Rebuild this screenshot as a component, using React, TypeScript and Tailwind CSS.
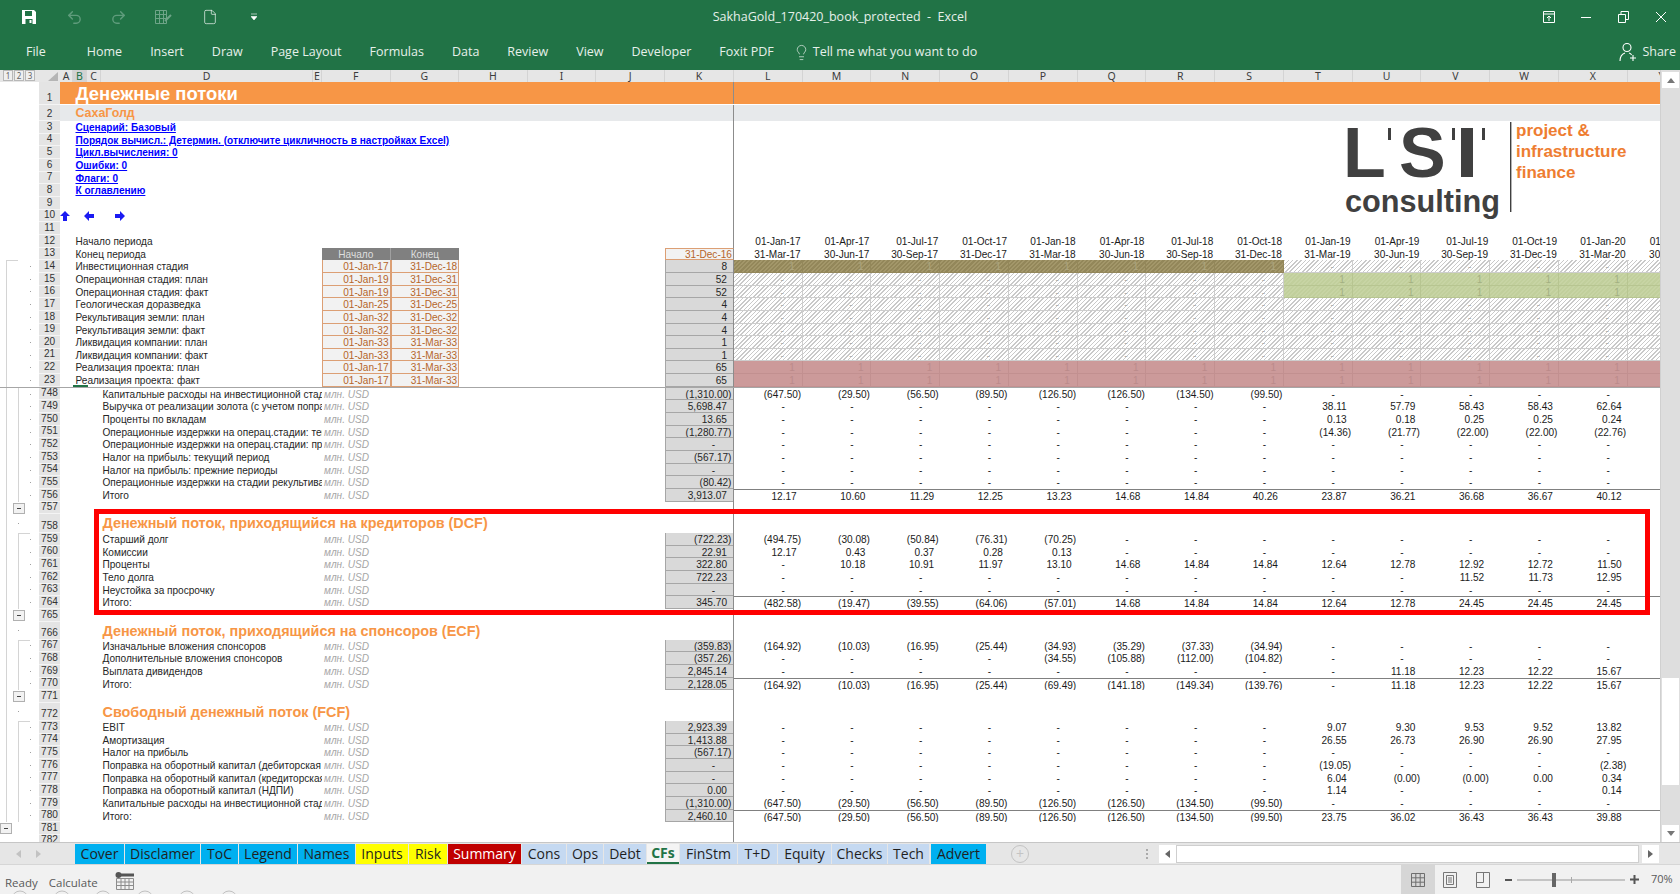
import { ReactNode } from "react";
import clsx from "clsx";
import { File, Lightbulb, Redo2, Undo2 } from "lucide-react";

const d = (n: number) => Array<string>(n).fill("-");
const starts = ["01-Jan-17", "01-Apr-17", "01-Jul-17", "01-Oct-17", "01-Jan-18", "01-Apr-18", "01-Jul-18", "01-Oct-18", "01-Jan-19", "01-Apr-19", "01-Jul-19", "01-Oct-19", "01-Jan-20", "01-Apr-20"];
const ends = ["31-Mar-17", "30-Jun-17", "30-Sep-17", "31-Dec-17", "31-Mar-18", "30-Jun-18", "30-Sep-18", "31-Dec-18", "31-Mar-19", "30-Jun-19", "30-Sep-19", "31-Dec-19", "31-Mar-20", "30-Jun-20"];
const capex = ["(647.50)", "(29.50)", "(56.50)", "(89.50)", "(126.50)", "(126.50)", "(134.50)", "(99.50)"];

const ribbon = ["Home", "Insert", "Draw", "Page Layout", "Formulas", "Data", "Review", "View", "Developer", "Foxit PDF"];

const columns = [
  { l: "A", w: "w-[13px]" },
  { l: "B", w: "w-[14px] bg-[#d2d2d2] border-b-2 border-[#217346] text-[#217346]" },
  { l: "C", w: "w-[14px]" },
  { l: "D", w: "w-[212px]" },
  { l: "E", w: "w-[9px]" },
  { l: "F", w: "w-[68.6px]" },
  { l: "G", w: "w-[68.6px]" },
  { l: "H", w: "w-[68.6px]" },
  { l: "I", w: "w-[68.6px]" },
  { l: "J", w: "w-[68.6px]" },
  { l: "K", w: "w-[69px]" },
  ...["L", "M", "N", "O", "P", "Q", "R", "S", "T", "U", "V", "W", "X", "Y"].map((l) => ({ l, w: "w-[68.75px]" })),
];

const tabs = [
  { t: "Cover", c: "w-[49px] bg-[#00b0f0]" },
  { t: "Disclamer", c: "w-[75px] bg-[#00b0f0]" },
  { t: "ToC", c: "w-[37px] bg-[#00b0f0]" },
  { t: "Legend", c: "w-[58px] bg-[#00b0f0]" },
  { t: "Names", c: "w-[57px] bg-[#00b0f0]" },
  { t: "Inputs", c: "w-[52px] bg-[#ffff00]" },
  { t: "Risk", c: "w-[38px] bg-[#ffff00]" },
  { t: "Summary", c: "w-[73px] bg-[#c00000] text-white" },
  { t: "Cons", c: "w-[44px] bg-[#c5d9f1]" },
  { t: "Ops", c: "w-[36px] bg-[#c5d9f1]" },
  { t: "Debt", c: "w-[42px] bg-[#c5d9f1]" },
  { t: "CFs", c: "w-[32px] bg-[#f4f4f4] font-bold text-[#217346] border-b-2 border-[#217346]" },
  { t: "FinStm", c: "w-[57px] bg-[#c5d9f1]" },
  { t: "T+D", c: "w-[39px] bg-[#c5d9f1]" },
  { t: "Equity", c: "w-[53px] bg-[#c5d9f1]" },
  { t: "Checks", c: "w-[55px] bg-[#c5d9f1]" },
  { t: "Tech", c: "w-[41px] bg-[#c5d9f1]" },
  { t: "Advert", c: "ml-[1px] w-[55px] bg-[#00b0f0]" },
];

function Num({ v, className }: { v?: string; className?: string }) {
  return (
    <div
      className={clsx(
        "h-full shrink-0 overflow-hidden whitespace-nowrap text-right",
        v === "-" ? "pr-[18px]" : v?.startsWith("(") ? "pr-[1.5px]" : "pr-[6px]",
        className,
      )}
    >
      {v}
    </div>
  );
}

function Gutter({ lv1, lv2, dot, btn }: { lv1?: boolean | "start"; lv2?: boolean | "start"; dot?: 2 | 3; btn?: 1 | 2 }) {
  return (
    <div className="flex h-full w-[39px] shrink-0 pl-[6px]">
      <div className={clsx("flex h-full w-[12px] items-center", lv1 && "border-l border-[#d4d4d4]", lv1 === "start" && "border-t")}>
        {btn === 1 && <Minus className="-ml-[6px]" />}
      </div>
      <div className={clsx("flex h-full w-[12px] items-center", lv2 && "border-l border-[#d4d4d4]", lv2 === "start" && "border-t")}>
        {btn === 2 && <Minus className="-ml-[5px]" />}
        {dot === 2 && <div className="size-px bg-[#a0a0a0]" />}
      </div>
      <div className="flex h-full items-center">{dot === 3 && <div className="size-px bg-[#a0a0a0]" />}</div>
    </div>
  );
}

function Minus({ className }: { className?: string }) {
  return (
    <div className={clsx("z-10 flex h-[11px] w-[12px] shrink-0 items-center justify-center border border-[#b0b0b0] bg-[#f2f2f2]", className)}>
      <div className="h-px w-[4px] bg-[#444444]" />
    </div>
  );
}

function RowNumber({ n }: { n: number }) {
  return (
    <div className="flex h-full w-[21px] shrink-0 items-end justify-center border-b border-[#f4f4f4] bg-[#e4e4e4] text-[#333333]">{n}</div>
  );
}

type RowProps = {
  n: number;
  h?: string;
  bg?: string;
  label?: ReactNode;
  labelClass?: string;
  deep?: boolean;
  unit?: boolean;
  f?: string;
  g?: string;
  k?: string;
  vals?: string[];
  valsClass?: string;
  line?: boolean;
  timeline?: ReactNode;
  gutter?: { lv1?: boolean | "start"; lv2?: boolean | "start"; dot?: 2 | 3; btn?: 1 | 2 };
};

function Row({ n, h = "h-[12.67px]", bg, label, labelClass, deep, unit, f, g, k, vals, valsClass, line, timeline, gutter }: RowProps) {
  return (
    <div className={clsx("flex shrink-0", h)}>
      <Gutter {...gutter} />
      <RowNumber n={n} />
      <div className={clsx("flex h-full flex-1", bg)}>
        <div className={clsx("h-full w-[262px] shrink-0 whitespace-nowrap", deep ? "pl-[42.5px]" : "pl-[15.5px]", unit && "overflow-hidden", labelClass)}>
          {label}
        </div>
        <div className="h-full w-[68.6px] shrink-0">
          {unit && <div className="pl-[2px] italic text-[#a6a6a6]">млн. USD</div>}
          {f && <DateCell v={f} />}
        </div>
        <div className="h-full w-[68.6px] shrink-0">{g && <DateCell v={g} />}</div>
        <div className="h-full w-[205.8px] shrink-0" />
        <div className="h-full w-[69px] shrink-0 border-r border-[#8c8c8c]">
          {k !== undefined && <Num v={k} className="w-full border-b border-l border-[#a6a6a6] bg-[#d9d9d9] text-[#262626]" />}
        </div>
        {timeline}
        {vals?.map((v, i) => (
          <Num key={i} v={v} className={clsx("w-[68.75px] text-[#1a1a1a]", line && "border-t border-[#808080]", valsClass)} />
        ))}
        {vals && line && <div className="h-full flex-1 border-t border-[#808080]" />}
      </div>
    </div>
  );
}

function DateCell({ v }: { v: string }) {
  return (
    <div className="h-full border-x border-b border-[#dc9f74] bg-[#f2f2f2] pr-[1px] text-right leading-[13px] text-[#b5652a]">{v}</div>
  );
}

function Bar({ from, to, kind, mark }: { from: number; to: number; kind: string; mark: string }) {
  const cls =
    kind === "olive"
      ? "bg-[repeating-linear-gradient(135deg,#93875a_0,#93875a_1.5px,#a3976a_1.5px,#a3976a_3px)] border-[#93875a] text-[#aca57f]"
      : kind === "green"
        ? "bg-[repeating-linear-gradient(135deg,#c1cf9c_0,#c1cf9c_1.5px,#c7d4a4_1.5px,#c7d4a4_3px)] border-[#b7c591] text-[#a3b082]"
        : kind === "red"
          ? "bg-[#cc9a9a] border-[#c29090] text-[#bb8a8a]"
          : "bg-[repeating-linear-gradient(135deg,#c9c9c9_0,#c9c9c9_1px,#ffffff_1px,#ffffff_3px)] border-[#cdcdcd] text-[#a8a8a8]";
  return (
    <>
      {Array.from({ length: to - from }).map((_, i) => (
        <div
          key={i}
          className={clsx(
            "h-full w-[68.75px] shrink-0 overflow-hidden border-r border-b text-right",
            mark === "-" ? "pr-[18px]" : "pr-[7px]",
            cls,
          )}
        >
          {mark}
        </div>
      ))}
    </>
  );
}

function Hatch({ a, b }: { a?: [string, string]; b?: [string, string] }) {
  return (
    <>
      <Bar from={0} to={8} kind={a?.[0] ?? "hatch"} mark={a?.[1] ?? "-"} />
      <Bar from={8} to={14} kind={b?.[0] ?? "hatch"} mark={b?.[1] ?? "-"} />
    </>
  );
}

function Logo() {
  return (
    <svg width="300" height="104" viewBox="0 0 300 104" className="absolute left-[1340px] top-[38px]">
      <g fontFamily="'Liberation Sans', Arial, sans-serif" fontWeight="700">
        <text x="3" y="57" fontSize="70" fill="#404040">L</text>
        <rect x="48" y="8" width="3" height="12" fill="#404040" />
        <text x="59" y="57" fontSize="70" fill="#404040">S</text>
        <rect x="112" y="8" width="3" height="12" fill="#404040" />
        <rect x="121" y="8" width="12" height="49" fill="#404040" />
        <rect x="142" y="8" width="3" height="12" fill="#404040" />
        <text x="5" y="92" fontSize="32" fill="#404040" textLength="155" lengthAdjust="spacingAndGlyphs">consulting</text>
        <rect x="170" y="2" width="1.4" height="90" fill="#404040" />
        <text x="176" y="16" fontSize="17" fill="#ee7d31">project &amp;</text>
        <text x="176" y="37" fontSize="17" fill="#ee7d31">infrastructure</text>
        <text x="176" y="58" fontSize="17" fill="#ee7d31">finance</text>
      </g>
    </svg>
  );
}

function Link({ children }: { children: ReactNode }) {
  return <span className="font-bold text-[#0000ff] underline">{children}</span>;
}

function Arrow({ dir, className }: { dir: "up" | "left" | "right"; className?: string }) {
  const p = dir === "up" ? "M5 0l5 5H7v5H3V5H0z" : dir === "left" ? "M0 5l5-5v3h5v4H5v3z" : "M10 5L5 0v3H0v4h5v3z";
  return (
    <svg width="10" height="10" viewBox="0 0 10 10" className={clsx("shrink-0", className)}>
      <path d={p} fill="#1b1bf2" />
    </svg>
  );
}

function TitleBar() {
  return (
    <div className="grid h-[34px] grid-cols-[1fr_auto_1fr] items-center text-white">
      <div className="flex items-center pl-[22px]">
        <svg width="14" height="14" viewBox="0 0 14 14">
          <path d="M0 0h12l2 2v12H0z" fill="#ffffff" />
          <rect x="3" y="1" width="7" height="5" fill="#217346" />
          <rect x="3.5" y="9" width="7" height="5" fill="#217346" />
          <rect x="7.5" y="10" width="2" height="3" fill="#ffffff" />
        </svg>
        <Undo2 size={17} strokeWidth={2} className="ml-[30px] text-[#5f9c7c]" />
        <Redo2 size={17} strokeWidth={2} className="ml-[27px] text-[#5f9c7c]" />
        <svg width="20" height="16" viewBox="0 0 20 16" fill="none" stroke="#6ea488" className="ml-[27px]">
          <path d="M1.5 1.5h11v13h-11zM1.5 5.5h11M1.5 9.5h11M5.5 1.5v13M9.5 1.5v13" />
          <path d="M11 12l6-6" strokeWidth="2" />
        </svg>
        <File size={16} strokeWidth={1} className="ml-[28px]" />
        <svg width="6" height="8" viewBox="0 0 6 8" className="ml-[33px]">
          <path d="M0 1h6M0 3.5h6L3 7z" fill="#ffffff" stroke="#ffffff" strokeWidth="0.6" />
        </svg>
      </div>
      <div className="font-['Open_Sans',sans-serif] text-[12.5px] text-[#e6f0ea]">SakhaGold_170420_book_protected&nbsp; -&nbsp; Excel</div>
      <div className="flex items-center justify-end pr-[13px]">
        <svg width="12" height="12" viewBox="0 0 12 12" fill="none" stroke="#ffffff">
          <path d="M.5 .5h11v11H.5zM.5 3h11M6 10V5M4 7l2-2 2 2" />
        </svg>
        <div className="ml-[26px] h-px w-[10px] bg-white" />
        <svg width="11" height="12" viewBox="0 0 11 12" fill="none" stroke="#ffffff" className="ml-[27px]">
          <path d="M.5 3.5h7v8h-7zM3 3.5V.5h7.5v8H7.5" />
        </svg>
        <svg width="12" height="12" viewBox="0 0 12 12" fill="none" stroke="#ffffff" className="ml-[26px]">
          <path d="M1 1l10 10M11 1L1 11" />
        </svg>
      </div>
    </div>
  );
}

function RibbonTabs() {
  return (
    <div className="flex h-[36px] items-center font-['Open_Sans',sans-serif] text-[12.5px] text-[#e6f0ea]">
      <div className="pl-[26px]">File</div>
      <div className="ml-[41px] flex gap-[28px]">
        {ribbon.map((t) => (
          <div key={t}>{t}</div>
        ))}
      </div>
      <Lightbulb size={17} strokeWidth={1} className="ml-[19px]" />
      <div className="ml-[3px]">Tell me what you want to do</div>
      <div className="flex-1" />
      <svg width="18" height="20" viewBox="0 0 18 20" fill="none" stroke="#ffffff" strokeWidth="1.1">
        <circle cx="8" cy="5.5" r="4" />
        <path d="M1 19c0-5 2-7 5-8M10 11c1 .3 2 1 2.6 1.8M11 16h6M14 13v6" />
      </svg>
      <div className="ml-[5px] pr-[4px]">Share</div>
    </div>
  );
}

function ColumnHeader() {
  return (
    <div className="flex h-[12px] shrink-0 bg-[#e6e6e6] text-[10.5px] leading-[12px] text-[#3c3c3c]">
      <div className="flex w-[39px] shrink-0 gap-px pl-[3px]">
        {["1", "2", "3"].map((x) => (
          <div key={x} className="h-[11px] w-[10px] border border-[#b8b8b8] bg-[#efefef] text-center text-[8px] leading-[9px] text-[#666666]">{x}</div>
        ))}
      </div>
      <div className="flex w-[21px] shrink-0 items-end pb-[1px] pl-[9px]">
        <div className="size-0 border-b-[9px] border-l-[10px] border-b-[#b5b5b5] border-l-transparent" />
      </div>
      {columns.map((c) => (
        <div key={c.l} className={clsx("shrink-0 border-r border-[#d4d4d4] text-center", c.w)}>{c.l}</div>
      ))}
    </div>
  );
}

function Sheet() {
  const on = { lv1: true as const, dot: 3 as const };
  const tl = (a?: [string, string], b?: [string, string]) => <Hatch a={a} b={b} />;
  const l1 = { lv1: "start" as const, dot: 3 as const };
  const body = { lv1: true as const, lv2: true as const, dot: 3 as const };
  const bstart = { lv1: true as const, lv2: "start" as const, dot: 3 as const };
  const head = { lv1: true as const, dot: 2 as const };
  const headText = "text-[14.4px] font-bold leading-[18px] text-[#f79646]";
  return (
    <div className="relative h-[760px] w-full overflow-hidden font-['Liberation_Sans',Arial,sans-serif] text-[10.08px] leading-[13px] text-[#262626]">
      <div className="flex w-[1696.5px] flex-col">
        <Row n={1} h="h-[23px]" bg="bg-[#f79646] border-b border-white" labelClass="text-[18.4px] font-bold leading-[23px] text-white" label="Денежные потоки" />
        <Row n={2} h="h-[16px]" bg="bg-[#e7e9eb]" labelClass="text-[12.4px] font-bold leading-[17px] text-[#f79646]" label="СахаГолд" />
        <Row n={3} label={<Link>Сценарий: Базовый</Link>} />
        <Row n={4} label={<Link>Порядок вычисл.: Детермин. (отключите цикличность в настройках Excel)</Link>} />
        <Row n={5} label={<Link>Цикл.вычисления: 0</Link>} />
        <Row n={6} label={<Link>Ошибки: 0</Link>} />
        <Row n={7} label={<Link>Флаги: 0</Link>} />
        <Row n={8} label={<Link>К оглавлению</Link>} />
        <Row n={9} />
        <Row
          n={10}
          labelClass="!pl-0"
          label={
            <div className="flex h-full items-center pt-[1px]">
              <Arrow dir="up" />
              <Arrow dir="left" className="ml-[14px]" />
              <Arrow dir="right" className="ml-[21px]" />
            </div>
          }
        />
        <Row n={11} />
        <Row n={12} label="Начало периода" vals={starts} valsClass="!pr-[2px]" />
        <div className="flex h-[12.67px] shrink-0">
          <Gutter />
          <RowNumber n={13} />
          <div className="h-full w-[262px] shrink-0 pl-[15.5px]">Конец периода</div>
          <div className="h-full w-[68.6px] shrink-0 border-r border-[#a0a0a0] bg-[#808080] text-center text-[#dedede]">Начало</div>
          <div className="h-full w-[68.6px] shrink-0 bg-[#808080] text-center text-[#dedede]">Конец</div>
          <div className="h-full w-[205.8px] shrink-0" />
          <div className="h-full w-[69px] shrink-0 border border-r-[#8c8c8c] border-[#dc9f74] bg-[#f2f2f2] pr-[1px] text-right leading-[12px] text-[#b5652a]">31-Dec-16</div>
          {ends.map((e) => (
            <Num key={e} v={e} className="w-[68.75px] !pr-[2px] text-[#1a1a1a]" />
          ))}
        </div>
        <Row n={14} gutter={l1} label="Инвестиционная стадия" f="01-Jan-17" g="31-Dec-18" k="8" timeline={tl(["olive", "1"])} />
        <Row n={15} gutter={on} label="Операционная стадия: план" f="01-Jan-19" g="31-Dec-31" k="52" timeline={tl(undefined, ["green", "1"])} />
        <Row n={16} gutter={on} label="Операционная стадия: факт" f="01-Jan-19" g="31-Dec-31" k="52" timeline={tl(undefined, ["green", "1"])} />
        <Row n={17} gutter={on} label="Геологическая доразведка" f="01-Jan-25" g="31-Dec-25" k="4" timeline={tl()} />
        <Row n={18} gutter={on} label="Рекультивация земли: план" f="01-Jan-32" g="31-Dec-32" k="4" timeline={tl()} />
        <Row n={19} gutter={on} label="Рекультивация земли: факт" f="01-Jan-32" g="31-Dec-32" k="4" timeline={tl()} />
        <Row n={20} gutter={on} label="Ликвидация компании: план" f="01-Jan-33" g="31-Mar-33" k="1" timeline={tl()} />
        <Row n={21} gutter={on} label="Ликвидация компании: факт" f="01-Jan-33" g="31-Mar-33" k="1" timeline={tl()} />
        <Row n={22} gutter={on} label="Реализация проекта: план" f="01-Jan-17" g="31-Mar-33" k="65" timeline={tl(["red", "1"], ["red", "1"])} />
        <Row n={23} gutter={on} label="Реализация проекта: факт" f="01-Jan-17" g="31-Mar-33" k="65" timeline={tl(["red", "1"], ["red", "1"])} />
        <div className="h-0 w-full border-t border-[#a6a6a6]" />
        <Row n={748} gutter={body} deep unit label="Капитальные расходы на инвестиционной стадии" k="(1,310.00)" vals={[...capex, ...d(5)]} />
        <Row n={749} gutter={body} deep unit label="Выручка от реализации золота (с учетом поправок)" k="5,698.47" vals={[...d(8), "38.11", "57.79", "58.43", "58.43", "62.64"]} />
        <Row n={750} gutter={body} deep unit label="Проценты по вкладам" k="13.65" vals={[...d(8), "0.13", "0.18", "0.25", "0.25", "0.24"]} />
        <Row n={751} gutter={body} deep unit label="Операционные издержки на операц.стадии: текущий период" k="(1,280.77)" vals={[...d(8), "(14.36)", "(21.77)", "(22.00)", "(22.00)", "(22.76)"]} />
        <Row n={752} gutter={body} deep unit label="Операционные издержки на операц.стадии: прежние периоды" k="-" vals={d(13)} />
        <Row n={753} gutter={body} deep unit label="Налог на прибыль: текущий период" k="(567.17)" vals={d(13)} />
        <Row n={754} gutter={body} deep unit label="Налог на прибыль: прежние периоды" k="-" vals={d(13)} />
        <Row n={755} gutter={body} deep unit label="Операционные издержки на стадии рекультивации" k="(80.42)" vals={d(13)} />
        <Row n={756} gutter={body} deep unit label="Итого" k="3,913.07" line vals={["12.17", "10.60", "11.29", "12.25", "13.23", "14.68", "14.84", "40.26", "23.87", "36.21", "36.68", "36.67", "40.12"]} />
        <Row n={757} gutter={{ lv1: true, btn: 2 }} />
        <Row n={758} h="h-[18.7px]" gutter={head} deep labelClass={headText} label="Денежный поток, приходящийся на кредиторов (DCF)" />
        <Row n={759} gutter={bstart} deep unit label="Старший долг" k="(722.23)" vals={["(494.75)", "(30.08)", "(50.84)", "(76.31)", "(70.25)", ...d(8)]} />
        <Row n={760} gutter={body} deep unit label="Комиссии" k="22.91" vals={["12.17", "0.43", "0.37", "0.28", "0.13", ...d(8)]} />
        <Row n={761} gutter={body} deep unit label="Проценты" k="322.80" vals={["-", "10.18", "10.91", "11.97", "13.10", "14.68", "14.84", "14.84", "12.64", "12.78", "12.92", "12.72", "11.50"]} />
        <Row n={762} gutter={body} deep unit label="Тело долга" k="722.23" vals={[...d(10), "11.52", "11.73", "12.95"]} />
        <Row n={763} gutter={body} deep unit label="Неустойка за просрочку" k="-" vals={d(13)} />
        <Row n={764} gutter={body} deep unit label="Итого:" k="345.70" line vals={["(482.58)", "(19.47)", "(39.55)", "(64.06)", "(57.01)", "14.68", "14.84", "14.84", "12.64", "12.78", "24.45", "24.45", "24.45"]} />
        <Row n={765} gutter={{ lv1: true, btn: 2 }} />
        <Row n={766} h="h-[18px]" gutter={head} deep labelClass={headText} label="Денежный поток, приходящийся на спонсоров (ECF)" />
        <Row n={767} gutter={bstart} deep unit label="Изначальные вложения спонсоров" k="(359.83)" vals={["(164.92)", "(10.03)", "(16.95)", "(25.44)", "(34.93)", "(35.29)", "(37.33)", "(34.94)", ...d(5)]} />
        <Row n={768} gutter={body} deep unit label="Дополнительные вложения спонсоров" k="(357.26)" vals={[...d(4), "(34.55)", "(105.88)", "(112.00)", "(104.82)", ...d(5)]} />
        <Row n={769} gutter={body} deep unit label="Выплата дивидендов" k="2,845.14" vals={[...d(9), "11.18", "12.23", "12.22", "15.67"]} />
        <Row n={770} gutter={body} deep unit label="Итого:" k="2,128.05" line vals={["(164.92)", "(10.03)", "(16.95)", "(25.44)", "(69.49)", "(141.18)", "(149.34)", "(139.76)", "-", "11.18", "12.23", "12.22", "15.67"]} />
        <Row n={771} gutter={{ lv1: true, btn: 2 }} />
        <Row n={772} h="h-[18px]" gutter={head} deep labelClass={headText} label="Свободный денежный поток (FCF)" />
        <Row n={773} gutter={bstart} deep unit label="EBIT" k="2,923.39" vals={[...d(8), "9.07", "9.30", "9.53", "9.52", "13.82"]} />
        <Row n={774} gutter={body} deep unit label="Амортизация" k="1,413.88" vals={[...d(8), "26.55", "26.73", "26.90", "26.90", "27.95"]} />
        <Row n={775} gutter={body} deep unit label="Налог на прибыль" k="(567.17)" vals={d(13)} />
        <Row n={776} gutter={body} deep unit label="Поправка на оборотный капитал (дебиторская задолженность)" k="-" vals={[...d(8), "(19.05)", "-", "-", "-", "(2.38)"]} />
        <Row n={777} gutter={body} deep unit label="Поправка на оборотный капитал (кредиторская задолженность)" k="-" vals={[...d(8), "6.04", "(0.00)", "(0.00)", "0.00", "0.34"]} />
        <Row n={778} gutter={body} deep unit label="Поправка на оборотный капитал (НДПИ)" k="0.00" vals={[...d(8), "1.14", "-", "-", "-", "0.14"]} />
        <Row n={779} gutter={body} deep unit label="Капитальные расходы на инвестиционной стадии" k="(1,310.00)" vals={[...capex, ...d(5)]} />
        <Row n={780} gutter={body} deep unit label="Итого:" k="2,460.10" line vals={[...capex, "23.75", "36.02", "36.43", "36.43", "39.88"]} />
        <Row n={781} gutter={{ btn: 1 }} />
        <Row n={782} />
      </div>
      <Logo />
      <div className="absolute left-[73px] top-[303px] h-[2px] w-[15px] bg-[#217346]" />
      <div className="absolute left-[94px] top-[427px] h-[106px] w-[1556px] border-[5px] border-[#ff0000]" />
    </div>
  );
}

function VerticalScroll() {
  return (
    <div className="flex w-[20px] shrink-0 flex-col border-l border-[#d0d0d0] bg-[#dedede] pl-[1px]">
      <div className="mt-[2px] flex h-[16px] w-[17px] items-center justify-center bg-white">
        <div className="size-0 border-x-[4px] border-b-[5px] border-x-transparent border-b-[#777777]" />
      </div>
      <div className="mt-[590px] h-[107px] w-[17px] bg-white" />
      <div className="mt-[40px] flex h-[17px] w-[17px] items-center justify-center bg-white">
        <div className="size-0 border-x-[4px] border-t-[5px] border-x-transparent border-t-[#777777]" />
      </div>
    </div>
  );
}

function SheetTabs() {
  return (
    <div className="flex h-[22px] shrink-0 items-center border-t border-[#c6c6c6] bg-[#e6e6e6] font-['Open_Sans',sans-serif] text-[14px] text-[#1f1f1f]">
      <div className="flex w-[75px] shrink-0 items-center gap-[15px] pl-[16px]">
        <div className="size-0 border-y-[4px] border-r-[5px] border-y-transparent border-r-[#c2c2c2]" />
        <div className="size-0 border-y-[4px] border-l-[5px] border-y-transparent border-l-[#c2c2c2]" />
      </div>
      <div className="flex h-[20px] gap-px self-end">
        {tabs.map((t) => (
          <div key={t.t} className={clsx("flex h-full shrink-0 items-center justify-center whitespace-nowrap pb-[2px]", t.c)}>{t.t}</div>
        ))}
      </div>
      <div className="ml-[25px] flex size-[18px] shrink-0 items-center justify-center rounded-full border border-[#c4c4c4] text-[14px] leading-none text-[#c4c4c4]">+</div>
      <div className="ml-[117px] flex shrink-0 flex-col gap-[2px]">
        <div className="size-[2px] bg-[#aaaaaa]" />
        <div className="size-[2px] bg-[#aaaaaa]" />
        <div className="size-[2px] bg-[#aaaaaa]" />
      </div>
      <div className="ml-[11px] flex h-[18px] w-[499.5px] shrink-0 items-stretch">
        <div className="flex w-[17px] items-center justify-center bg-white">
          <div className="size-0 border-y-[4px] border-r-[5px] border-y-transparent border-r-[#666666]" />
        </div>
        <div className="flex-1 border border-[#cfcfcf] bg-white" />
        <div className="ml-[3px] flex w-[17px] items-center justify-center bg-white">
          <div className="size-0 border-y-[4px] border-l-[5px] border-y-transparent border-l-[#666666]" />
        </div>
      </div>
    </div>
  );
}

function StatusBar() {
  return (
    <div className="relative flex h-[30px] shrink-0 items-center overflow-hidden border-t border-[#d6d6d6] bg-[#f1f1f1] font-['Open_Sans',sans-serif] text-[11.5px] text-[#595959]">
      <div className="pl-[5px] pt-[6px]">Ready</div>
      <div className="ml-[11px] pt-[6px]">Calculate</div>
      <svg width="20" height="18" viewBox="0 0 20 18" fill="none" className="ml-[17px] mt-[3px]">
        <circle cx="3.5" cy="3" r="3" fill="#555555" />
        <rect x="6" y="1.5" width="13" height="3" fill="#555555" />
        <path d="M1.5 6.5h17v11h-17zM1.5 10h17M1.5 13.5h17M6 6.5v11M10 6.5v11M14 6.5v11" stroke="#8c8c8c" />
      </svg>
      <svg width="230" height="4" viewBox="0 0 230 4" fill="none" stroke="#c0c0c0" className="absolute bottom-0 left-[10px]">
        <circle cx="10" cy="9" r="8" />
        <circle cx="52" cy="9" r="8" />
        <circle cx="93" cy="9" r="8" />
        <circle cx="135" cy="9" r="8" />
        <circle cx="177" cy="9" r="8" />
        <circle cx="219" cy="9" r="8" />
      </svg>
      <div className="flex-1" />
      <div className="flex h-full w-[34px] items-center justify-center bg-[#d6d6d6]">
        <svg width="14" height="14" viewBox="0 0 14 14" fill="none" stroke="#6e6e6e">
          <path d="M.5 .5h13v13H.5zM.5 4.8h13M.5 9.2h13M4.8 .5v13M9.2 .5v13" />
        </svg>
      </div>
      <svg width="14" height="16" viewBox="0 0 14 16" fill="none" stroke="#777777" className="ml-[8px]">
        <path d="M.5 .5h13v15H.5zM3.5 3.5h7v9h-7zM5 6h4M5 8h4M5 10h4" />
      </svg>
      <svg width="14" height="16" viewBox="0 0 14 16" fill="none" stroke="#777777" className="ml-[19px]">
        <path d="M.5 .5h13v15H.5zM.5 10.5h7V.5" />
      </svg>
      <div className="ml-[14.5px] h-[2px] w-[7px] bg-[#555555]" />
      <div className="ml-[5.5px] flex w-[108px] items-center">
        <div className="h-[2px] w-[35px] bg-[#c4c4c4]" />
        <div className="h-[14px] w-[4px] bg-[#666666]" />
        <div className="h-[2px] w-[15px] bg-[#c4c4c4]" />
        <div className="h-[6px] w-px bg-[#aaaaaa]" />
        <div className="h-[2px] w-[53px] bg-[#c4c4c4]" />
      </div>
      <svg width="9" height="9" viewBox="0 0 9 9" fill="#555555" className="ml-[4.5px]">
        <path d="M3.5 0h2v3.5H9v2H5.5V9h-2V5.5H0v-2h3.5z" />
      </svg>
      <div className="ml-[12.5px] w-[29px] whitespace-nowrap text-[11px]">70%</div>
    </div>
  );
}

export default function App() {
  return (
    <div className="flex h-[894px] w-[1680px] flex-col overflow-hidden bg-white">
      <div className="shrink-0 bg-[#217346]">
        <TitleBar />
        <RibbonTabs />
      </div>
      <div className="flex h-[772px] shrink-0">
        <div className="flex w-[1660px] shrink-0 flex-col overflow-hidden">
          <ColumnHeader />
          <Sheet />
        </div>
        <VerticalScroll />
      </div>
      <SheetTabs />
      <StatusBar />
    </div>
  );
}
